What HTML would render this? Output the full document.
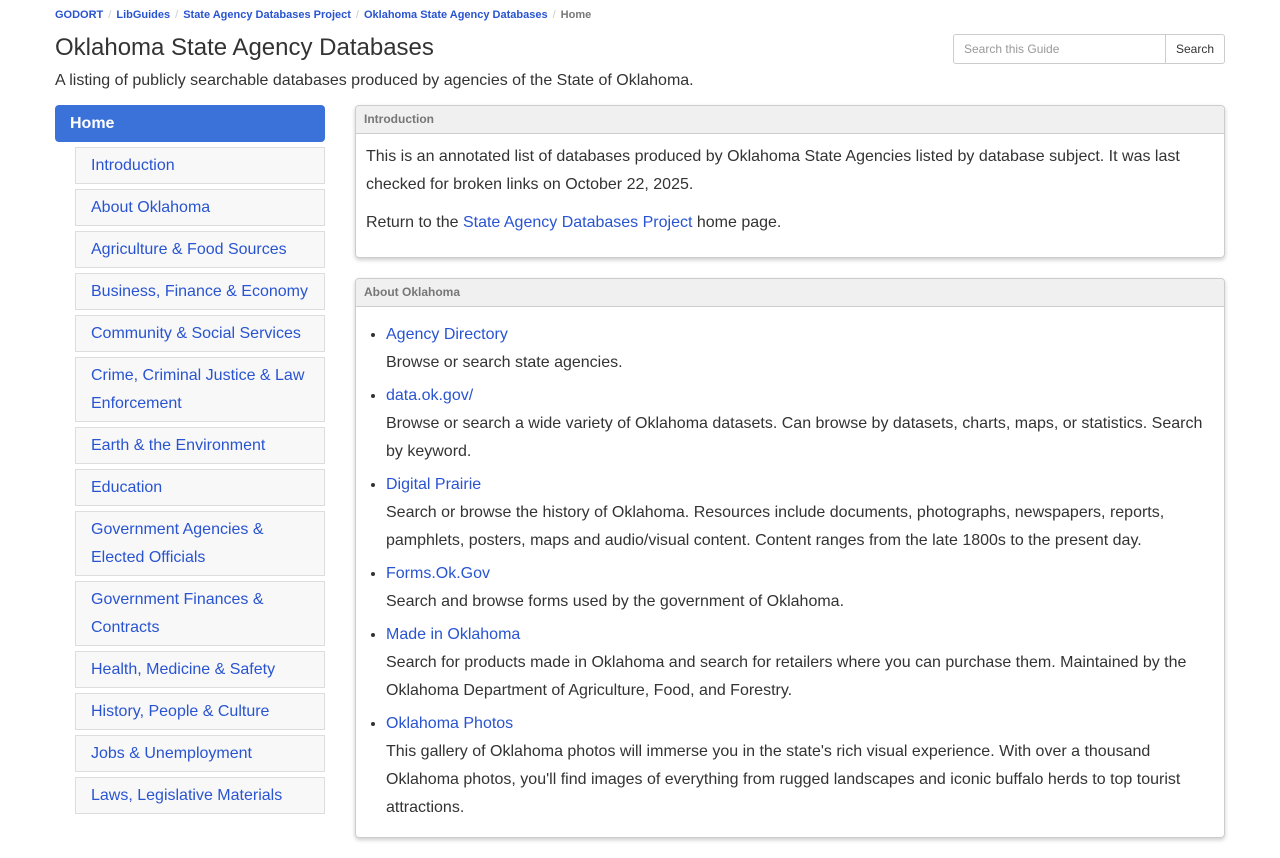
<!DOCTYPE html>
<html><head><meta charset="utf-8"><style>
html,body{height:800px;overflow:hidden}
body{margin:0;font-family:"Liberation Sans",Arial,sans-serif;color:#333;background:#fff;font-size:16px}
a{color:#2954d1;text-decoration:none}
.bc{position:absolute;left:55px;top:9px;font-size:11px;font-weight:bold;color:#777}
.bc a{color:#2954d1}.bc span{color:#ccc;padding:0 5px;font-weight:normal}
h1{position:absolute;left:55px;top:34px;margin:0;font-size:24px;font-weight:normal;color:#333}
.sub{position:absolute;left:55px;top:72px;font-size:16px}
.search{position:absolute;left:953px;top:34px;display:flex}
.search .in{width:201px;height:28px;border:1px solid #ccc;border-radius:3px 0 0 3px;font-size:12px;color:#999;line-height:28px;padding-left:10px}
.search .bt{height:28px;border:1px solid #ccc;border-left:none;border-radius:0 3px 3px 0;font-size:12px;line-height:28px;padding:0 10px;color:#333}
.nav{position:absolute;left:55px;top:105px;width:270px}
.home{background:#3b72d9;color:#fff;font-weight:bold;border-radius:4px;height:37px;line-height:37px;padding-left:15px;margin-bottom:5px}
.it{margin-left:20px;border:1px solid #ddd;background:#f8f8f8;padding:4px 15px 3px;line-height:28px;margin-bottom:5px;color:#2954d1}
.main{position:absolute;left:355px;top:105px;width:870px}
.panel{border:1px solid #ccc;border-radius:4px;margin-bottom:20px;box-shadow:0 2px 4px rgba(0,0,0,.2)}
.ph{background:#f0f0f0;border-bottom:1px solid #ccc;height:27px;line-height:26px;font-size:12px;font-weight:bold;color:#777;padding-left:8px;border-radius:4px 4px 0 0}
.pb{padding:9px 10px 10px;line-height:28px}
.pb p{margin:0 0 10px}
ul{margin:9px 0 0;padding-left:20px}
li{margin-bottom:5px}
</style></head><body>
<div class="bc"><a>GODORT</a><span>/</span><a>LibGuides</a><span>/</span><a>State Agency Databases Project</a><span>/</span><a>Oklahoma State Agency Databases</a><span>/</span>Home</div>
<h1>Oklahoma State Agency Databases</h1>
<div class="sub">A listing of publicly searchable databases produced by agencies of the State of Oklahoma.</div>
<div class="search"><div class="in">Search this Guide</div><div class="bt">Search</div></div>
<div class="nav">
<div class="home">Home</div>
<div class="it">Introduction</div>
<div class="it">About Oklahoma</div>
<div class="it">Agriculture &amp; Food Sources</div>
<div class="it">Business, Finance &amp; Economy</div>
<div class="it">Community &amp; Social Services</div>
<div class="it">Crime, Criminal Justice &amp; Law Enforcement</div>
<div class="it">Earth &amp; the Environment</div>
<div class="it">Education</div>
<div class="it">Government Agencies &amp; Elected Officials</div>
<div class="it">Government Finances &amp; Contracts</div>
<div class="it">Health, Medicine &amp; Safety</div>
<div class="it">History, People &amp; Culture</div>
<div class="it">Jobs &amp; Unemployment</div>
<div class="it">Laws, Legislative Materials</div>
</div>
<div class="main">
<div class="panel"><div class="ph">Introduction</div><div class="pb">
<p>This is an annotated list of databases produced by Oklahoma State Agencies listed by database subject. It was last checked for broken links on October 22, 2025.</p>
<p>Return to the <a>State Agency Databases Project</a> home page.</p></div></div>
<div class="panel"><div class="ph">About Oklahoma</div><div class="pb" style="padding-top:5px">
<ul>
<li><a>Agency Directory</a><br>Browse or search state agencies.</li>
<li><a>data.ok.gov/</a><br>Browse or search a wide variety of Oklahoma datasets. Can browse by datasets, charts, maps, or statistics. Search by keyword.</li>
<li><a>Digital Prairie</a><br>Search or browse the history of Oklahoma. Resources include documents, photographs, newspapers, reports, pamphlets, posters, maps and audio/visual content. Content ranges from the late 1800s to the present day.</li>
<li><a>Forms.Ok.Gov</a><br>Search and browse forms used by the government of Oklahoma.</li>
<li><a>Made in Oklahoma</a><br>Search for products made in Oklahoma and search for retailers where you can purchase them. Maintained by the Oklahoma Department of Agriculture, Food, and Forestry.</li>
<li><a>Oklahoma Photos</a><br>This gallery of Oklahoma photos will immerse you in the state's rich visual experience. With over a thousand Oklahoma photos, you'll find images of everything from rugged landscapes and iconic buffalo herds to top tourist attractions.</li>
</ul></div></div>
</div>
</body></html>
